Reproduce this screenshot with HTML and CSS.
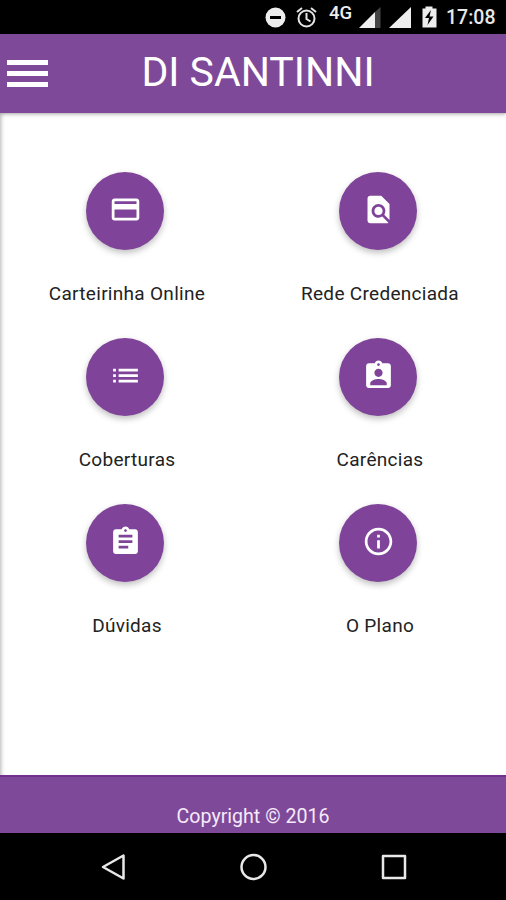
FILE: index.html
```html
<!DOCTYPE html>
<html lang="pt-BR">
<head>
<meta charset="utf-8">
<title>DI SANTINNI</title>
<link rel="stylesheet" href="styles.css">
</head>
<body>
<div class="status">
  <svg class="status-icons" width="183" height="34" viewBox="0 0 183 34" fill="#eee">
    <circle cx="19.500" cy="17.500" r="10"/>
    <path d="M14 16h11v3H14z" fill="#000"/>
    <g fill="none" stroke="#e4e4e4" stroke-width="2">
      <circle cx="50.500" cy="18.500" r="8"/>
      <path d="M50.500 13v6l4 2.500M41 12l5-4M60 12l-5-4"/>
    </g>
    <text class="network" x="73" y="19">4G</text>
    <path d="M103 28L119 12V28z"/>
    <path d="M119 12L124.500 7V28H119z" fill="#444"/>
    <path d="M133 28L155 7V28z"/>
    <path d="M166.500 8.500h3V6.500h7v2h4V27.500h-14z"/>
    <path d="M175 10l-6 8h4l-1.500 7 6-8.500h-4z" fill="#000"/>
  </svg>
  <span class="clock">17:08</span>
</div>
<header class="header">
  <div class="menu"><i></i><i></i><i></i></div>
  <h1 class="title">DI SANTINNI</h1>
</header>
<main class="grid">
  <a class="item"><span class="fab"><svg viewBox="0 0 24 24"><path d="M20 4H4c-1.110 0-1.990.89-1.990 2L2 18c0 1.110.89 2 2 2h16c1.110 0 2-.89 2-2V6c0-1.110-.89-2-2-2zm0 14H4v-6h16v6zm0-10H4V6h16v2z"/></svg></span><span class="label">Carteirinha Online</span></a>
  <a class="item"><span class="fab"><svg viewBox="0 0 24 24"><path d="M20 19.590V8l-6-6H6c-1.100 0-1.990.9-1.990 2L4 20c0 1.100.89 2 1.990 2H18c.45 0 .85-.15 1.190-.4l-4.430-4.430c-.8.52-1.740.83-2.760.83-2.760 0-5-2.240-5-5s2.240-5 5-5 5 2.240 5 5c0 1.020-.31 1.960-.83 2.750L20 19.590zM9 13c0 1.660 1.340 3 3 3s3-1.340 3-3-1.340-3-3-3-3 1.340-3 3z"/></svg></span><span class="label">Rede Credenciada</span></a>
  <a class="item"><span class="fab"><svg viewBox="0 0 24 24"><path d="M3 13h2v-2H3v2zm0 4h2v-2H3v2zm0-8h2V7H3v2zm4 4h14v-2H7v2zm0 4h14v-2H7v2zM7 7v2h14V7H7z"/></svg></span><span class="label">Coberturas</span></a>
  <a class="item"><span class="fab"><svg viewBox="0 0 24 24"><path d="M19 3h-4.180C14.400 1.840 13.300 1 12 1c-1.300 0-2.400.84-2.820 2H5c-1.100 0-2 .9-2 2v14c0 1.100.9 2 2 2h14c1.100 0 2-.9 2-2V5c0-1.100-.9-2-2-2zm-7 0c.55 0 1 .45 1 1s-.45 1-1 1-1-.45-1-1 .45-1 1-1zm0 4c1.660 0 3 1.340 3 3s-1.340 3-3 3-3-1.340-3-3 1.340-3 3-3zm6 12H6v-1.400c0-2 4-3.100 6-3.100s6 1.100 6 3.100V19z"/></svg></span><span class="label">Carências</span></a>
  <a class="item"><span class="fab"><svg viewBox="0 0 24 24"><path d="M19 3h-4.180C14.400 1.840 13.300 1 12 1c-1.300 0-2.400.84-2.820 2H5c-1.100 0-2 .9-2 2v14c0 1.100.9 2 2 2h14c1.100 0 2-.9 2-2V5c0-1.100-.9-2-2-2zm-7 0c.55 0 1 .45 1 1s-.45 1-1 1-1-.45-1-1 .45-1 1-1zm2 14H7v-2h7v2zm3-4H7v-2h10v2zm0-4H7V7h10v2z"/></svg></span><span class="label">Dúvidas</span></a>
  <a class="item"><span class="fab"><svg viewBox="0 0 24 24"><path d="M11 17h2v-6h-2v6zm1-15C6.480 2 2 6.480 2 12s4.480 10 10 10 10-4.480 10-10S17.520 2 12 2zm0 18c-4.410 0-8-3.590-8-8s3.590-8 8-8 8 3.590 8 8-3.590 8-8 8zM11 9h2V7h-2v2z"/></svg></span><span class="label">O Plano</span></a>
</main>
<footer class="footer">Copyright © 2016</footer>
<nav class="nav">
  <svg viewBox="0 0 30 30"><path d="M5 15L25.500 3.500V26.500z"/></svg>
  <svg viewBox="0 0 30 30"><circle cx="14.500" cy="15" r="12"/></svg>
  <svg viewBox="0 0 30 30"><path d="M4 4h22v22H4z"/></svg>
</nav>
</body>
</html>
```

FILE: styles.css
```css
* { box-sizing: border-box; }
body {
  margin: 0;
  width: 506px;
  height: 900px;
  display: flex;
  flex-direction: column;
  overflow: hidden;
  background: #fff;
  font-family: Roboto, sans-serif;
}
.status {
  height: 34px;
  flex: none;
  display: flex;
  align-items: center;
  justify-content: flex-end;
  padding-right: 10px;
  background: #000;
  color: #e8e8e8;
}
.status-icons { margin-right: 7px; }
.network { font-size: 18.500px; font-weight: 500; }
.clock { width: 50px; font-size: 19.500px; font-weight: 500; line-height: 34px; padding-top: 2px; white-space: nowrap; }
.header {
  height: 79px;
  flex: none;
  display: grid;
  grid-template-columns: 54px 1fr 44px;
  background: #7f4999;
  box-shadow: 0 1px 4px rgba(0, 0, 0, .35);
  z-index: 1;
}
.menu { display: flex; flex-direction: column; gap: 6px; padding: 26px 6px 0 7px; }
.menu i { height: 5px; background: #fff; }
.title { margin: 0; color: #fff; font-size: 41px; font-weight: 400; line-height: 76px; text-align: center; white-space: nowrap; }
.grid {
  flex: 1;
  display: grid;
  grid-template-columns: 253px 253px;
  grid-auto-rows: 166px;
  padding-top: 59px;
  box-shadow: inset 4px 0 4px -3px rgba(0, 0, 0, .3);
}
.item { display: flex; flex-direction: column; align-items: center; }
.fab {
  width: 78px;
  height: 78px;
  margin-right: 3px;
  border-radius: 50%;
  background: #7f4499;
  box-shadow: 0 3px 6px rgba(0, 0, 0, .25);
  display: flex;
  align-items: center;
  justify-content: center;
}
.fab svg { width: 33px; height: 33px; margin-bottom: 3px; fill: #fff; }
.label { margin: 32px 0 0 1px; font-size: 19px; line-height: 24px; letter-spacing: .3px; color: #222; }
.footer {
  height: 58px;
  flex: none;
  padding-top: 28px;
  border-top: 2px solid #73318f;
  background: #7f4999;
  color: #f6eafa;
  font-size: 19.600px;
  line-height: 24px;
  text-align: center;
}
.nav {
  height: 67px;
  flex: none;
  display: flex;
  justify-content: space-between;
  align-items: center;
  padding: 0 97px 0 98px;
  background: #000;
}
.nav svg { width: 30px; height: 30px; fill: none; stroke: #e8e8e8; stroke-width: 2.500; stroke-linejoin: round; }
```
